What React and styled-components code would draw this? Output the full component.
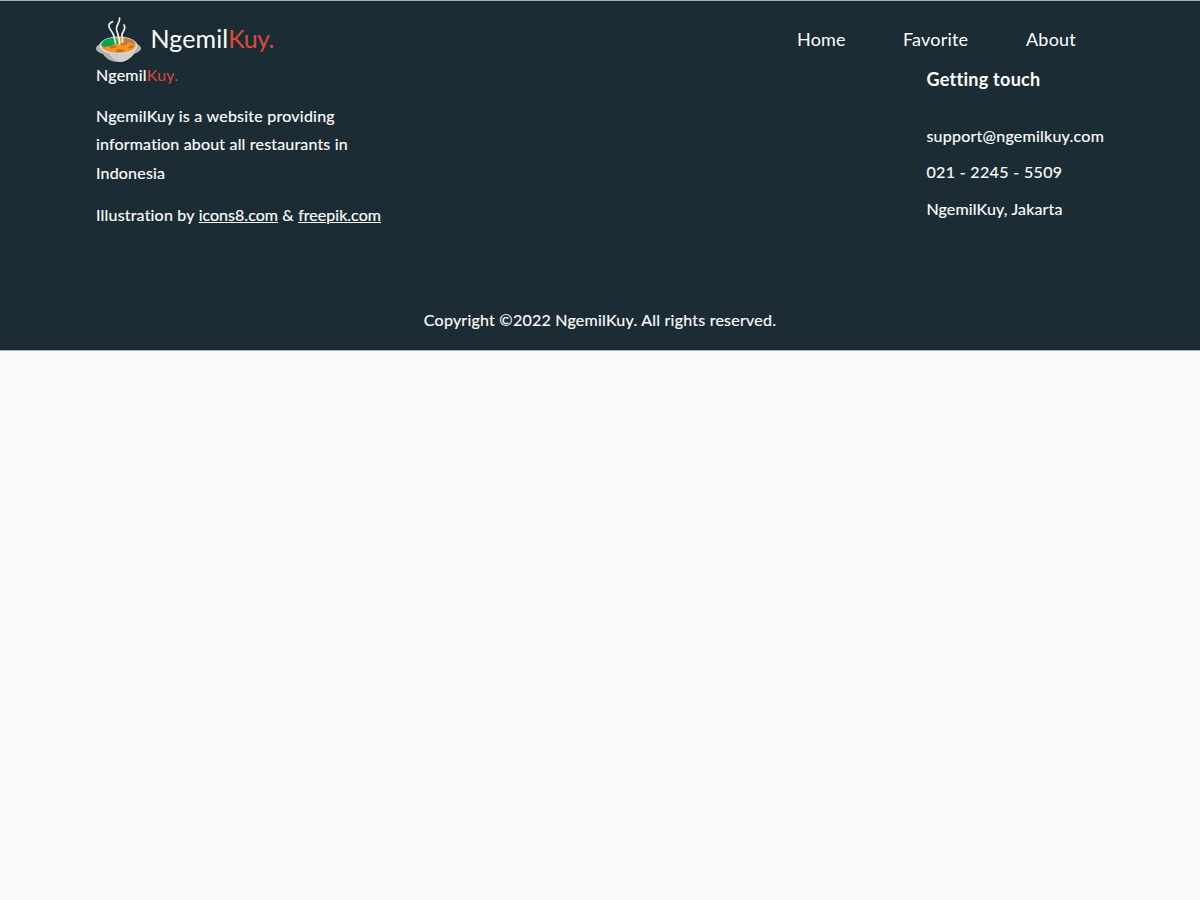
import React from "react";
import styled, { createGlobalStyle } from "styled-components";

const GlobalStyle = createGlobalStyle`
  * { box-sizing: border-box; }
  body {
    margin: 0;
    background: #fafafa;
    color: #fff;
    font-family: Lato, "Liberation Sans", sans-serif;
    font-size: 16px;
    line-height: 28.8px;
    -webkit-text-stroke: 0.15px currentColor;
  }
  a { color: inherit; }
  p, h2, ul { margin: 0; padding: 0; }
  ul { list-style: none; }
`;

const Page = styled.div`
  height: 351px;
  background: #1c2c34;
  border-top: 1px solid #a5abae;
  border-bottom: 1px solid #a5abae;
  display: flex;
  flex-direction: column;
`;

const Header = styled.header`
  height: 60px;
  padding: 16px 96px 0;
  display: flex;
  justify-content: space-between;
`;

const Logo = styled.a`
  display: flex;
  align-items: flex-start;
  gap: 9.5px;
  text-decoration: none;
`;

const Bowl = styled.svg`
  width: 45px;
  height: 45px;
`;

const Text = styled.span`
  display: block;
  white-space: nowrap;
  letter-spacing: ${(p) => p.$track || 0}px;
`;

const Accent = styled.span`
  color: #d84a3a;
  -webkit-text-stroke-width: 0;
`;

const LogoText = styled(Text)`
  font-size: 25px;
  line-height: 42px;
  -webkit-text-stroke-width: 0;

  ${Accent} {
    letter-spacing: -0.55px;
  }
`;

const CreditLink = styled.a`
  letter-spacing: 0.03px;
`;

const Nav = styled.nav`
  display: flex;
  padding: 7px 27px 0 0;
  gap: 57px;
  -webkit-text-stroke-width: 0;
`;

const NavLink = styled.a`
  font-size: 18px;
  line-height: 30px;
  text-decoration: none;
  width: ${(p) => p.$width}px;
`;

const Footer = styled.footer`
  flex: 1;
  padding: 0 96px;
  display: flex;
  flex-direction: column;
  justify-content: space-between;
`;

const Columns = styled.div`
  display: flex;
  justify-content: space-between;
`;

const About = styled.div`
  width: 300px;
  display: flex;
  flex-direction: column;
  gap: 12.2px;
`;

const Description = styled.p`
  line-height: 28.5px;
  padding-bottom: 0.9px;
`;

const Contact = styled.div`
  width: 177.6px;
  padding-top: 4px;
`;

const ContactTitle = styled.h2`
  font-size: 18px;
  font-weight: 700;
  line-height: 29px;
  margin-bottom: 23.5px;
  -webkit-text-stroke-width: 0;
`;

const ContactItem = styled.li`
  line-height: 36px;
  margin-bottom: ${(p) => p.$gap}px;
`;

const Copyright = styled.div`
  display: flex;
  justify-content: center;
  padding-bottom: 15px;
`;

function SoupBowl() {
  return (
    <Bowl viewBox="0 0 45 45" aria-hidden="true">
      <path d="M0 31.500 C0 28.500 4 27 7 26 H38 C42 27 45 29 45 31.500 C45 34 41 36 38 37 C34 42 29 45 22.500 45 C16 45 10 42 7 37 C3 36 0 34 0 31.500Z" fill="#b2b2b4" />
      <ellipse cx="22.500" cy="28.500" rx="19" ry="9" fill="#dededf" />
      <path d="M4 31 C9 40 35 40 41 31 L38 36.500 C34 42 29 45 24 45 C18 43 15 40 13 36Z" fill="#d0d0d2" />
      <ellipse cx="22.500" cy="28.200" rx="17.200" ry="7.700" fill="#f7931e" />
      <path d="M5.300 28 C6 23 13 20.500 20 20.800 L23 27 C17 26 17 30 12 29 C10 30.500 7 30.500 5.300 28Z" fill="#00a651" />
      <path d="M25 20.800 C34 21 39 24 39.500 27 C34 25 28 26 25 20.800Z" fill="#b9783f" />
      <g fill="#b57335">
        <ellipse cx="17" cy="30" rx="3.500" ry="1.300" transform="rotate(-14 17 30)" />
        <ellipse cx="28" cy="26.500" rx="3.500" ry="1.500" transform="rotate(-12 28 26.500)" />
        <ellipse cx="35" cy="30" rx="3" ry="1.400" transform="rotate(-20 35 30)" />
        <ellipse cx="24" cy="33.500" rx="4.200" ry="1.500" />
      </g>
      <g fill="none" stroke="#f0f0f0" strokeWidth="1.700" strokeLinecap="round">
        <path d="M16.500 4.700 C12 6.500 12 10 15 13.500 C19 18 18 21 19.500 26" />
        <path d="M23.500 1 C24.500 5 20 8 20.500 12 C21 17 24 20 23.500 27" />
        <path d="M28 8 C31 13 25 15 26 19 C27.500 22 26 24 26.500 25.500" />
      </g>
    </Bowl>
  );
}

const navItems = [
  { label: "Home", width: 49, track: 0.2 },
  { label: "Favorite", width: 66, track: 0.2 },
  { label: "About", width: 51, track: 0.2 },
];

const contacts = [
  { label: "support@ngemilkuy.com", track: 0.25, gap: 0 },
  { label: "021 - 2245 - 5509", track: 0.33, gap: 1 },
  { label: "NgemilKuy, Jakarta", track: 0.16, gap: 0 },
];

export default function App() {
  return (
    <>
      <GlobalStyle />
      <Page>
        <Header>
          <Logo href="#">
            <SoupBowl />
            <LogoText $track={0.1}>Ngemil<Accent>Kuy.</Accent></LogoText>
          </Logo>
          <Nav>
            {navItems.map((item) => (
              <NavLink href="#" key={item.label} $width={item.width}>
                <Text $track={item.track}>{item.label}</Text>
              </NavLink>
            ))}
          </Nav>
        </Header>
        <Footer>
          <Columns>
            <About>
              <Text $track={0.25}>Ngemil<Accent>Kuy.</Accent></Text>
              <Description>
                <Text $track={0.24}>NgemilKuy is a website providing</Text>
                <Text $track={0.18}>information about all restaurants in</Text>
                <Text $track={0.2}>Indonesia</Text>
              </Description>
              <Text $track={0.2}>
                Illustration by <CreditLink href="#">icons8.com</CreditLink> &amp;{" "}
                <CreditLink href="#">freepik.com</CreditLink>
              </Text>
            </About>
            <Contact>
              <ContactTitle><Text $track={0.28}>Getting touch</Text></ContactTitle>
              <ul>
                {contacts.map((item) => (
                  <ContactItem key={item.label} $gap={item.gap}>
                    <Text $track={item.track}>{item.label}</Text>
                  </ContactItem>
                ))}
              </ul>
            </Contact>
          </Columns>
          <Copyright>
            <Text $track={0.23}>Copyright ©2022 NgemilKuy. All rights reserved.</Text>
          </Copyright>
        </Footer>
      </Page>
    </>
  );
}
